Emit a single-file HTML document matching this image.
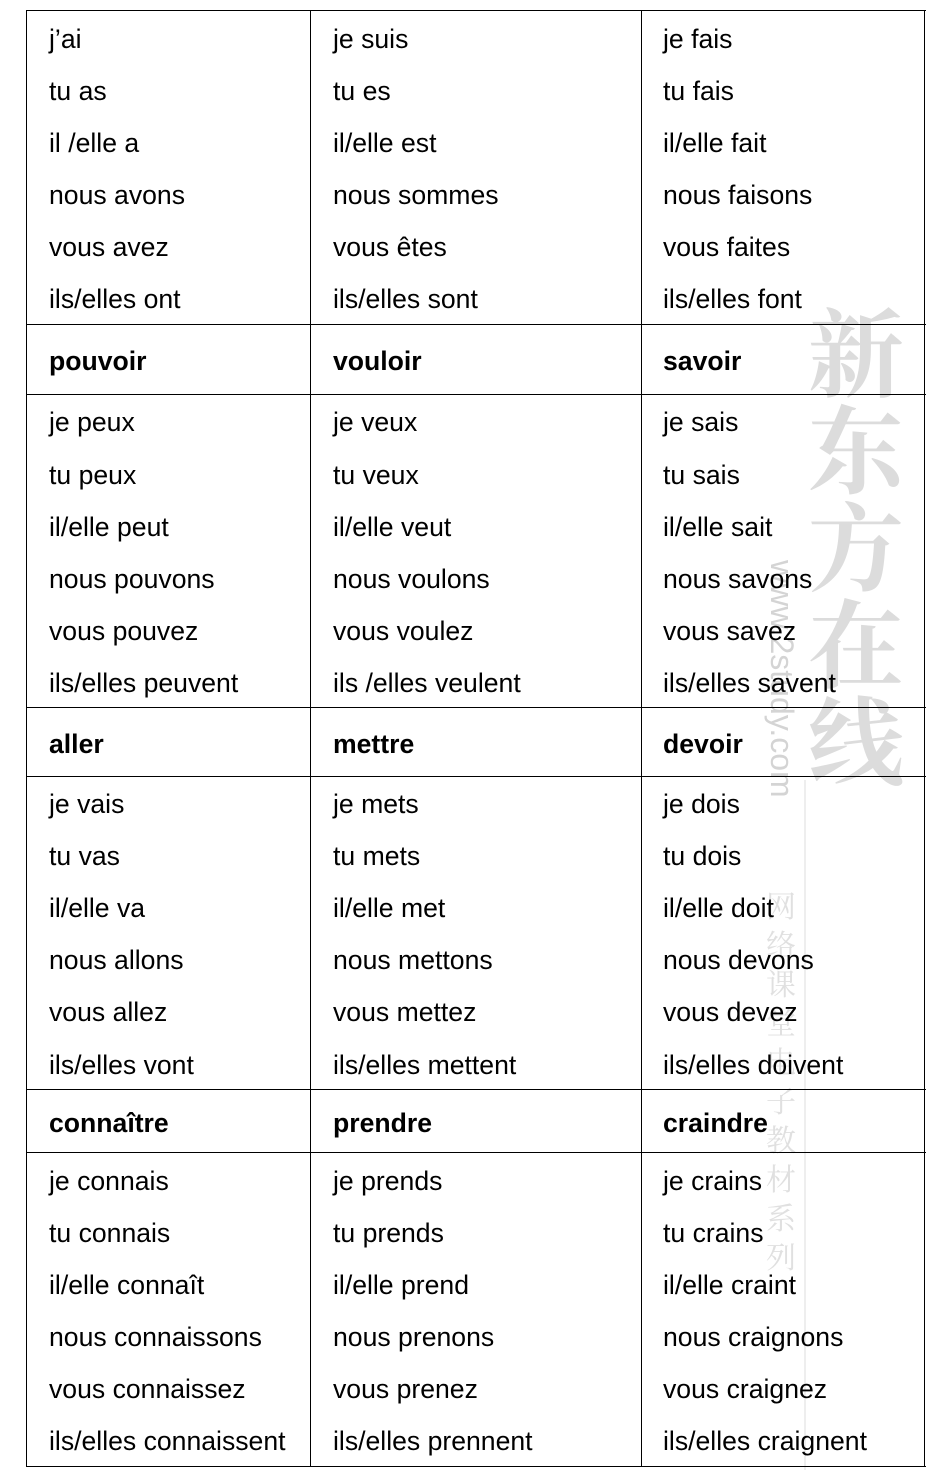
<!DOCTYPE html>
<html><head><meta charset="utf-8"><style>
body{margin:0;width:948px;height:1471px;background:#fff;position:relative;overflow:hidden;font-family:"Liberation Sans",Arial,sans-serif;color:#000}
.l{position:absolute;font-size:26.6px;line-height:30px;white-space:nowrap;margin-top:0px}
.b{font-weight:bold}
.h{position:absolute;left:26px;width:900px;height:0;border-top:1.5px solid #000}
.v{position:absolute;top:10px;height:1457px;width:0;border-left:1.5px solid #000}
.wm{position:absolute;color:#dcdcdc;font-family:"Noto Serif CJK SC","Noto Sans CJK SC",serif;z-index:-1}
</style></head><body>
<div class="wm" style="left:808px;top:300px;font-size:96px;line-height:97px;width:100px;font-weight:bold">新<br>东<br>方<br>在<br>线</div>
<div class="wm" style="left:764px;top:560px;font-size:32px;transform-origin:0 0;transform:translate(36px,0) rotate(90deg);font-family:'Liberation Sans',sans-serif;color:#d4d4d4">www.2study.com</div>
<div class="wm" style="left:766px;top:885px;font-size:30px;line-height:39px;width:34px;color:#e0e0e0">网<br>络<br>课<br>堂<br>电<br>子<br>教<br>材<br>系<br>列</div>
<div class="wm" style="left:804px;top:780px;width:2px;height:690px;background:#eee"></div>

<div class="h" style="top:10px"></div><div class="h" style="top:324px"></div><div class="h" style="top:394px"></div><div class="h" style="top:707px"></div><div class="h" style="top:776px"></div><div class="h" style="top:1089px"></div><div class="h" style="top:1152px"></div><div class="h" style="top:1466px"></div>
<div class="v" style="left:26px"></div><div class="v" style="left:310px"></div><div class="v" style="left:641px"></div><div class="v" style="left:924px"></div>

<div class="l" style="left:49px;top:24px">j’ai</div><div class="l" style="left:49px;top:76px">tu as</div><div class="l" style="left:49px;top:128px">il /elle a</div><div class="l" style="left:49px;top:180px">nous avons</div><div class="l" style="left:49px;top:232px">vous avez</div><div class="l" style="left:49px;top:284px">ils/elles ont</div>
<div class="l" style="left:333px;top:24px">je suis</div><div class="l" style="left:333px;top:76px">tu es</div><div class="l" style="left:333px;top:128px">il/elle est</div><div class="l" style="left:333px;top:180px">nous sommes</div><div class="l" style="left:333px;top:232px">vous êtes</div><div class="l" style="left:333px;top:284px">ils/elles sont</div>
<div class="l" style="left:663px;top:24px">je fais</div><div class="l" style="left:663px;top:76px">tu fais</div><div class="l" style="left:663px;top:128px">il/elle fait</div><div class="l" style="left:663px;top:180px">nous faisons</div><div class="l" style="left:663px;top:232px">vous faites</div><div class="l" style="left:663px;top:284px">ils/elles font</div>

<div class="l b" style="left:49px;top:346px">pouvoir</div><div class="l b" style="left:333px;top:346px">vouloir</div><div class="l b" style="left:663px;top:346px">savoir</div>

<div class="l" style="left:49px;top:407px">je peux</div><div class="l" style="left:49px;top:460px">tu peux</div><div class="l" style="left:49px;top:512px">il/elle peut</div><div class="l" style="left:49px;top:564px">nous pouvons</div><div class="l" style="left:49px;top:616px">vous pouvez</div><div class="l" style="left:49px;top:668px">ils/elles peuvent</div>
<div class="l" style="left:333px;top:407px">je veux</div><div class="l" style="left:333px;top:460px">tu veux</div><div class="l" style="left:333px;top:512px">il/elle veut</div><div class="l" style="left:333px;top:564px">nous voulons</div><div class="l" style="left:333px;top:616px">vous voulez</div><div class="l" style="left:333px;top:668px">ils /elles veulent</div>
<div class="l" style="left:663px;top:407px">je sais</div><div class="l" style="left:663px;top:460px">tu sais</div><div class="l" style="left:663px;top:512px">il/elle sait</div><div class="l" style="left:663px;top:564px">nous savons</div><div class="l" style="left:663px;top:616px">vous savez</div><div class="l" style="left:663px;top:668px">ils/elles savent</div>

<div class="l b" style="left:49px;top:729px">aller</div><div class="l b" style="left:333px;top:729px">mettre</div><div class="l b" style="left:663px;top:729px">devoir</div>

<div class="l" style="left:49px;top:789px">je vais</div><div class="l" style="left:49px;top:841px">tu vas</div><div class="l" style="left:49px;top:893px">il/elle va</div><div class="l" style="left:49px;top:945px">nous allons</div><div class="l" style="left:49px;top:997px">vous allez</div><div class="l" style="left:49px;top:1050px">ils/elles vont</div>
<div class="l" style="left:333px;top:789px">je mets</div><div class="l" style="left:333px;top:841px">tu mets</div><div class="l" style="left:333px;top:893px">il/elle met</div><div class="l" style="left:333px;top:945px">nous mettons</div><div class="l" style="left:333px;top:997px">vous mettez</div><div class="l" style="left:333px;top:1050px">ils/elles mettent</div>
<div class="l" style="left:663px;top:789px">je dois</div><div class="l" style="left:663px;top:841px">tu dois</div><div class="l" style="left:663px;top:893px">il/elle doit</div><div class="l" style="left:663px;top:945px">nous devons</div><div class="l" style="left:663px;top:997px">vous devez</div><div class="l" style="left:663px;top:1050px">ils/elles doivent</div>

<div class="l b" style="left:49px;top:1108px">connaître</div><div class="l b" style="left:333px;top:1108px">prendre</div><div class="l b" style="left:663px;top:1108px">craindre</div>

<div class="l" style="left:49px;top:1166px">je connais</div><div class="l" style="left:49px;top:1218px">tu connais</div><div class="l" style="left:49px;top:1270px">il/elle connaît</div><div class="l" style="left:49px;top:1322px">nous connaissons</div><div class="l" style="left:49px;top:1374px">vous connaissez</div><div class="l" style="left:49px;top:1426px">ils/elles connaissent</div>
<div class="l" style="left:333px;top:1166px">je prends</div><div class="l" style="left:333px;top:1218px">tu prends</div><div class="l" style="left:333px;top:1270px">il/elle prend</div><div class="l" style="left:333px;top:1322px">nous prenons</div><div class="l" style="left:333px;top:1374px">vous prenez</div><div class="l" style="left:333px;top:1426px">ils/elles prennent</div>
<div class="l" style="left:663px;top:1166px">je crains</div><div class="l" style="left:663px;top:1218px">tu crains</div><div class="l" style="left:663px;top:1270px">il/elle craint</div><div class="l" style="left:663px;top:1322px">nous craignons</div><div class="l" style="left:663px;top:1374px">vous craignez</div><div class="l" style="left:663px;top:1426px">ils/elles craignent</div>
</body></html>
